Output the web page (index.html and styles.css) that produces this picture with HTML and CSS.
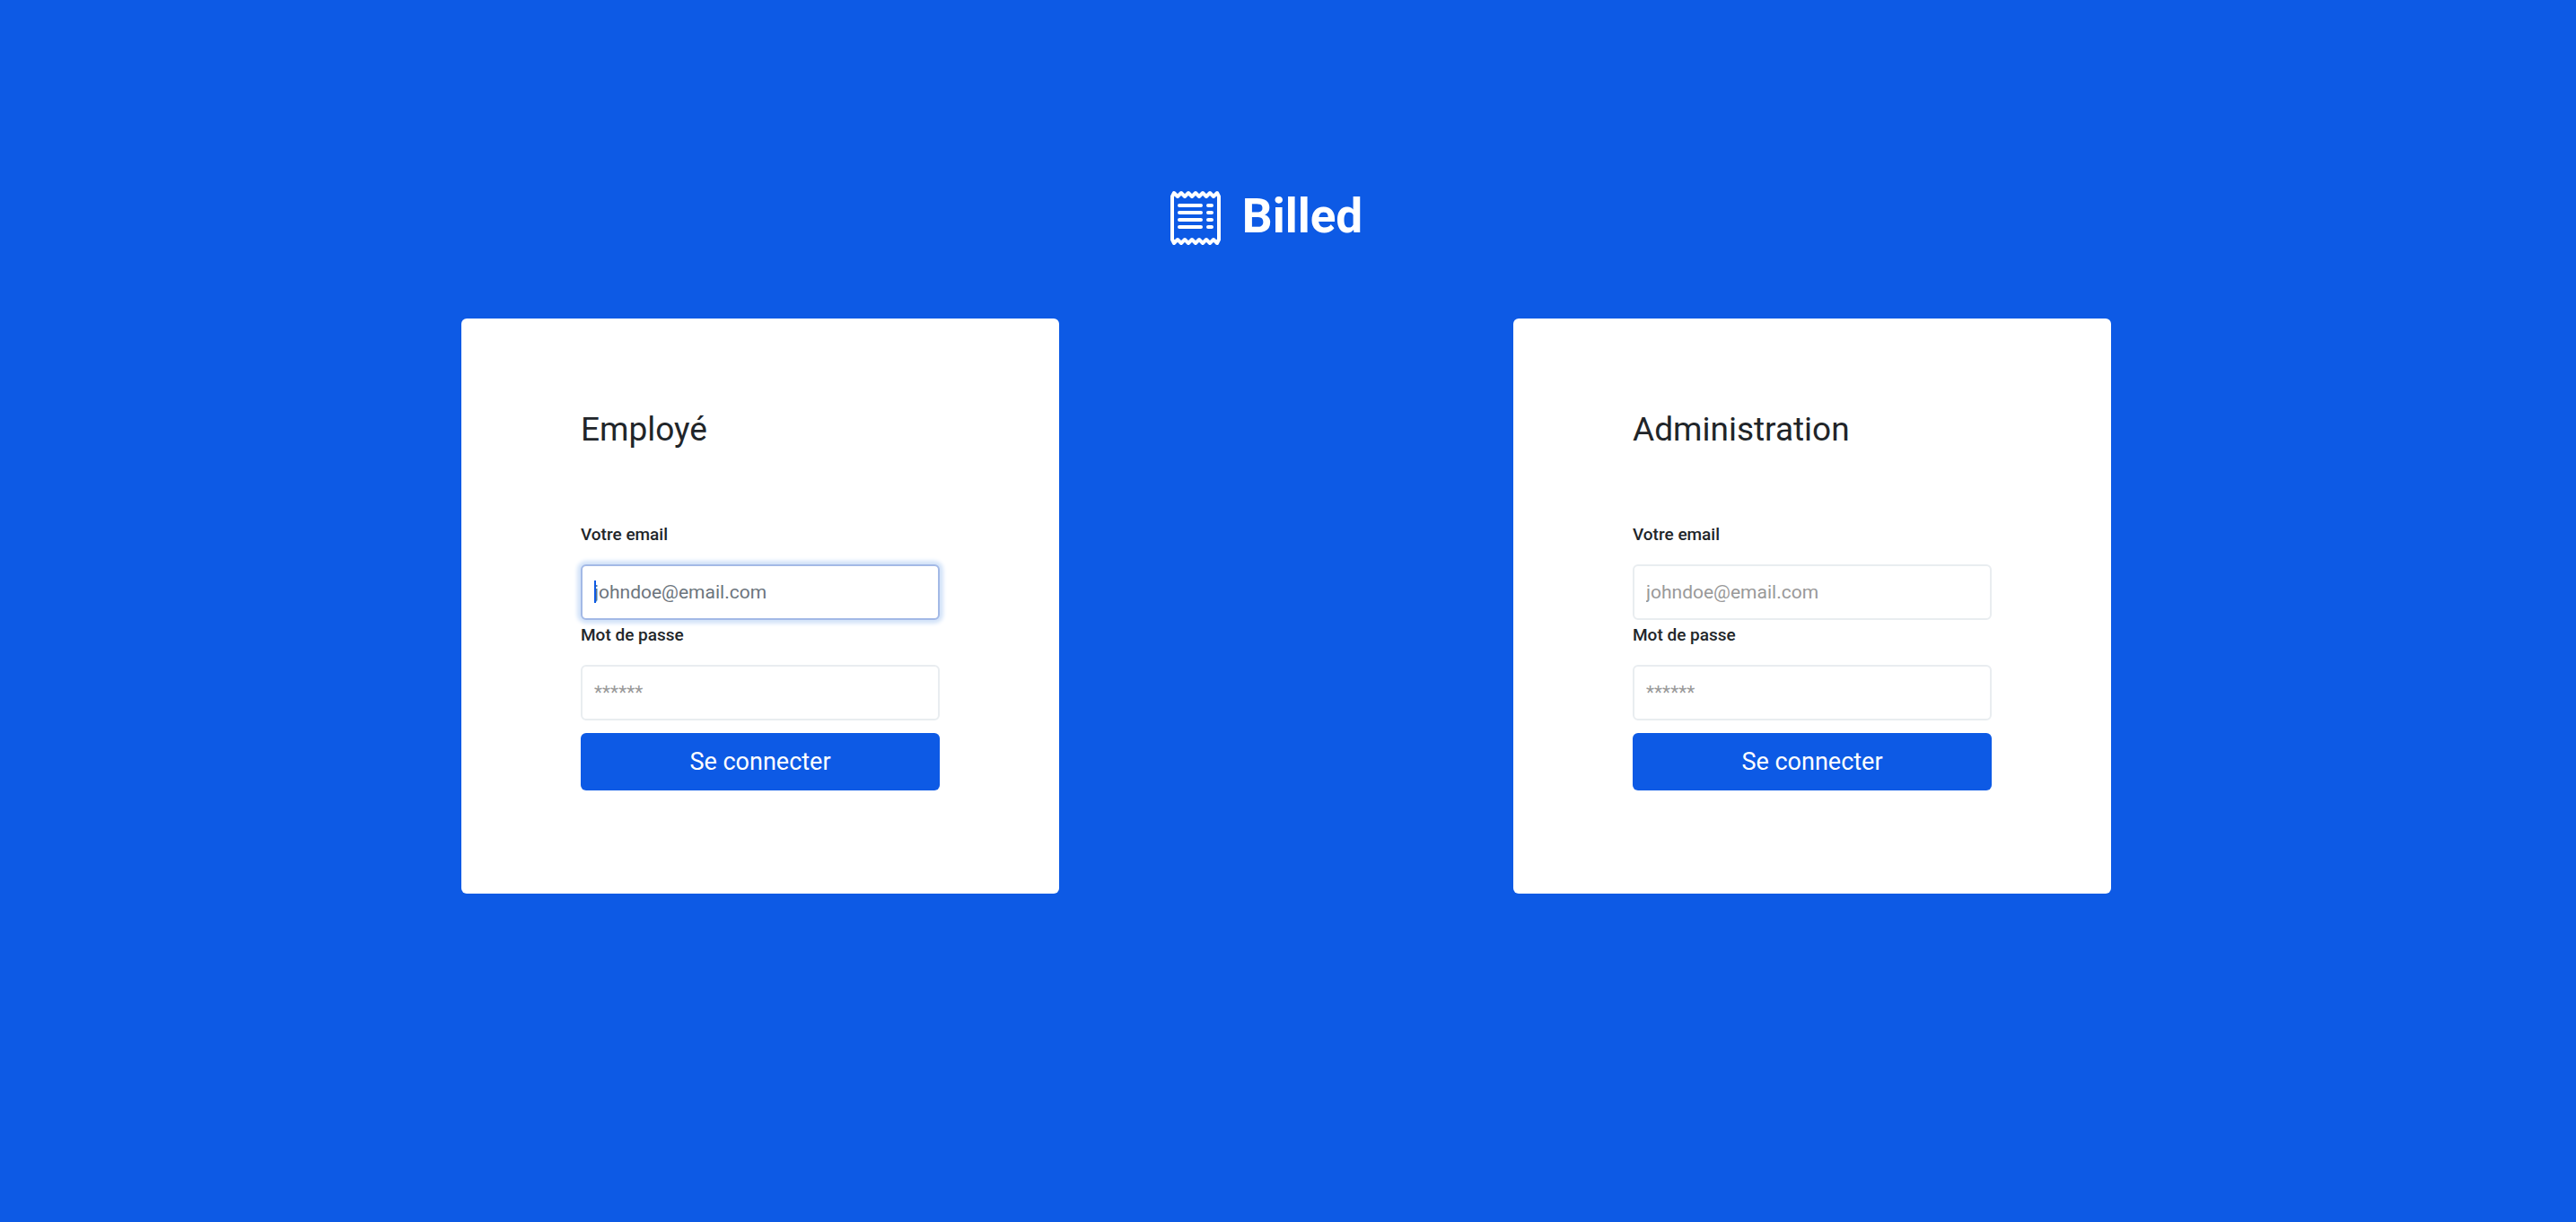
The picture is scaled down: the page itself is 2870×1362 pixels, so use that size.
FILE: index.html
```html
<!DOCTYPE html>
<html lang="fr">
<head>
<meta charset="utf-8">
<meta name="viewport" content="width=device-width, initial-scale=1">
<title>Billed</title>
<link rel="stylesheet" href="styles.css">
</head>
<body>
<header class="brand">
  <svg class="brand-icon" viewBox="0 0 16 16" fill="none" stroke="currentColor" stroke-linecap="round" stroke-linejoin="round" aria-hidden="true">
    <path d="M1.500 2 2 1 3 2 4 1 5 2 6 1 7 2 8 1 9 2 10 1 11 2 12 1 13 2 14 1 14.500 2V14L14 15 13 14 12 15 11 14 10 15 9 14 8 15 7 14 6 15 5 14 4 15 3 14 2 15 1.500 14z"/>
    <path d="M3.500 4.500h6M3.500 6.500h6M3.500 8.500h6M3.500 10.500h6M11.500 4.500h1M11.500 6.500h1M11.500 8.500h1M11.500 10.500h1"/>
  </svg>
  <h1 class="brand-name">Billed</h1>
</header>
<main class="logins">
  <form class="card">
    <h2 class="card-title">Employé</h2>
    <label class="label" for="employee-email">Votre email</label>
    <div class="field">
      <input class="input input-active" id="employee-email" type="email" placeholder="johndoe@email.com">
      <span class="caret"></span>
    </div>
    <label class="label" for="employee-password">Mot de passe</label>
    <div class="field">
      <input class="input" id="employee-password" type="password" placeholder="******">
    </div>
    <button class="submit" type="submit">Se connecter</button>
  </form>
  <form class="card">
    <h2 class="card-title">Administration</h2>
    <label class="label" for="admin-email">Votre email</label>
    <div class="field">
      <input class="input" id="admin-email" type="email" placeholder="johndoe@email.com">
    </div>
    <label class="label" for="admin-password">Mot de passe</label>
    <div class="field">
      <input class="input" id="admin-password" type="password" placeholder="******">
    </div>
    <button class="submit" type="submit">Se connecter</button>
  </form>
</main>
</body>
</html>
```
FILE: styles.css
```css
* {
  box-sizing: border-box;
}

body {
  min-height: 100vh;
  margin: 0;
  padding: 211px 4px 0 0;
  background: #0d5ae5;
  color: #212529;
  font-family: Roboto, sans-serif;
}

.brand {
  display: flex;
  justify-content: center;
  align-items: center;
  gap: 20px;
  margin-bottom: 80px;
  padding-right: 48px;
  color: #fff;
}

.brand-icon {
  width: 64px;
  height: 64px;
}

.brand-name {
  margin: 0;
  padding-bottom: 4px;
  font-size: 53px;
  font-weight: 700;
  line-height: 60px;
}

.logins {
  display: grid;
  grid-template-columns: repeat(2, minmax(0, 666px));
  justify-content: space-between;
  width: 90%;
  max-width: 1838px;
  margin: 0 auto;
}

.card {
  display: flex;
  flex-direction: column;
  padding: 101px 133px 115px;
  border-radius: 6px;
  background: #fff;
}

.card-title {
  margin: 0 0 80px;
  font-size: 37px;
  font-weight: 400;
  line-height: 46px;
}

.label {
  margin-bottom: 19px;
  font-size: 19px;
  font-weight: 500;
  line-height: 28px;
}

.field {
  position: relative;
  margin-bottom: 3px;
}

.input {
  display: block;
  width: 100%;
  height: 62px;
  padding: 0 13px;
  border: 2px solid #e9edf0;
  border-radius: 6px;
  background: #fff;
  color: #495057;
  font: 400 21px/30px Roboto, sans-serif;
}

.input::placeholder {
  color: #999;
  opacity: 1;
}

.input-active,
.input:focus {
  border-color: #a3b9e6;
  outline: 0;
  box-shadow: 0 0 4px 4px #d3e3f9;
}

.input-active::placeholder {
  color: #6c757d;
}

.caret {
  position: absolute;
  top: 18px;
  left: 15px;
  width: 2px;
  height: 25px;
  background: #0d5ae5;
}

.submit {
  height: 64px;
  margin-top: 11px;
  border: 0;
  border-radius: 6px;
  background: #0d5ae5;
  color: #fff;
  font: 400 27px/36px Roboto, sans-serif;
}
```
